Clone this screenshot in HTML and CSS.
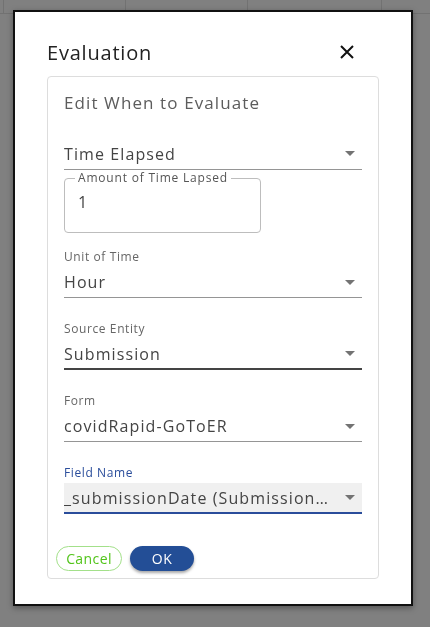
FILE: index.html
```html
<!DOCTYPE html>
<html>
<head>
<meta charset="utf-8">
<link rel="stylesheet" href="styles.css">
</head>
<body>
<div class="backdrop">
  <div class="bg-row">
    <div class="bg-cell c0"></div>
    <div class="bg-cell c1"></div>
    <div class="bg-cell c2"></div>
    <div class="bg-cell c3"></div>
    <div class="bg-cell c4"></div>
  </div>
</div>

<div class="dialog">
  <div class="dialog-head">
    <h1 class="dialog-title">Evaluation</h1>
    <svg class="close" width="16" height="16" viewBox="0 0 16 16"><path d="M2 2 L14 14 M14 2 L2 14" stroke="#111" stroke-width="2" fill="none"/></svg>
  </div>
  <div class="card">
    <h2 class="card-title">Edit When to Evaluate</h2>

    <div class="select first">
      <span class="value">Time Elapsed</span>
      <span class="arrow"></span>
    </div>

    <fieldset class="outlined">
      <legend>Amount of Time Lapsed</legend>
      <span class="value">1</span>
    </fieldset>

    <div class="field">
      <label class="label">Unit of Time</label>
      <div class="select"><span class="value">Hour</span><span class="arrow"></span></div>
    </div>

    <div class="field">
      <label class="label">Source Entity</label>
      <div class="select hover"><span class="value">Submission</span><span class="arrow"></span></div>
    </div>

    <div class="field">
      <label class="label">Form</label>
      <div class="select"><span class="value">covidRapid-GoToER</span><span class="arrow"></span></div>
    </div>

    <div class="field focused">
      <label class="label">Field Name</label>
      <div class="select filled"><span class="value">_submissionDate (Submission…</span><span class="arrow"></span></div>
    </div>

    <div class="actions">
      <button class="btn cancel">Cancel</button>
      <button class="btn ok">OK</button>
    </div>
  </div>
</div>
</body>
</html>
```

FILE: styles.css
```css
* { box-sizing: border-box; }
html, body { margin: 0; padding: 0; }
body {
  width: 430px;
  height: 627px;
  background: #808080;
  font-family: "Open Sans", "Noto Sans", sans-serif;
  overflow: hidden;
}
.backdrop { width: 430px; }
.bg-row {
  display: flex;
  height: 14px;
  border-bottom: 1px solid #727272;
}
.bg-cell { border-right: 1px solid #727272; height: 13px; }
.c0 { width: 4px; }
.c1 { width: 122px; }
.c2 { width: 122px; }
.c3 { width: 134px; }
.c4 { flex: 1; border-right: none; }

.dialog {
  position: fixed;
  left: 13px;
  top: 10px;
  width: 400px;
  height: 596px;
  background: #fff;
  border: 2px solid #111;
  box-shadow: 0 2px 6px rgba(0,0,0,0.35);
  padding: 25px 32px 25px 32px;
  display: flex;
  flex-direction: column;
}
.dialog-head {
  display: flex;
  align-items: center;
  justify-content: space-between;
  height: 30px;
  margin-bottom: 9px;
}
.dialog-title {
  margin: 0;
  font-size: 20px;
  font-weight: 500;
  color: #222;
  letter-spacing: 0.8px;
}
.close { margin-right: 24px; }

.card {
  flex: 1;
  border: 1px solid #ddd;
  border-radius: 4px;
  padding: 14px 16px 7px 16px;
  display: flex;
  flex-direction: column;
}
.card-title {
  margin: 0;
  font-size: 17px;
  line-height: 24px;
  font-weight: 400;
  color: #5c5c5c;
  letter-spacing: 1.1px;
}
.select {
  position: relative;
  display: flex;
  align-items: center;
  height: 28px;
  padding-bottom: 3px;
  border-bottom: 1px solid #959595;
}
.select.first { margin-top: 26px; height: 29px; }
.value {
  font-size: 16px;
  color: #444;
  letter-spacing: 1.1px;
  white-space: nowrap;
}
.arrow {
  margin-left: auto;
  margin-right: 7px;
  width: 0;
  height: 0;
  border-left: 5px solid transparent;
  border-right: 5px solid transparent;
  border-top: 5px solid #737373;
}
.outlined {
  margin: 1px 0 0 0;
  width: 197px;
  height: 62px;
  border: 1px solid #bdbdbd;
  border-radius: 4px;
  padding: 0 13px;
  min-width: 0;
}
.outlined legend {
  font-size: 12px;
  color: #555;
  padding: 0 3px;
  margin-left: -3px;
  line-height: 14px;
  letter-spacing: 0.8px;
}
.outlined .value { display: block; margin-top: 6px; }

.field { margin-top: 16px; display: flex; flex-direction: column; }
.field + .field { margin-top: 23px; }
.label {
  font-size: 12px;
  line-height: 16px;
  color: #666;
  letter-spacing: 0.6px;
  margin-bottom: 5px;
}
.select.hover { border-bottom: 2px solid #444; height: 28px; }
.focused .label { color: #2a4d9b; margin-bottom: 2px; }
.select.filled {
  background: #f0f0f0;
  height: 31px;
  padding-bottom: 0;
  border-bottom: 2px solid #2a4d9b;
}
.filled .value { overflow: hidden; }

.actions {
  margin-top: auto;
  display: flex;
  gap: 8px;
  margin-left: -8px;
}
.btn {
  height: 25px;
  border-radius: 13px;
  font-family: inherit;
  font-size: 14px;
  letter-spacing: 0.4px;
  padding: 0;
  cursor: pointer;
}
.cancel {
  width: 66px;
  background: #fff;
  border: 1px solid #a3e08a;
  color: #52c41a;
}
.ok {
  width: 64px;
  background: #234e96;
  border: none;
  color: #fff;
  box-shadow: 0 2px 3px rgba(0,0,0,0.35);
}
```
